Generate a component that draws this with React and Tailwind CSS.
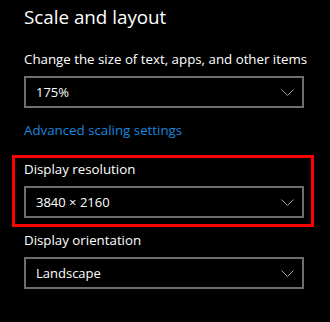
import React from 'react';

const font = { fontFamily: '"Open Sans", "Noto Sans", sans-serif' };

const Chevron = () => (
  <svg width="13" height="7" viewBox="0 0 13 7" fill="none">
    <polyline points="0.5,0.5 6.5,6.5 12.5,0.5" stroke="#a6a6a6" strokeWidth="1" />
  </svg>
);

const Dropdown = ({ value }) => (
  <div className="mt-[7px] w-[280px] h-[32px] border-2 border-[#6e6e6e] flex items-center justify-between pl-[10px] pr-[8px]">
    <span className="text-[13px] leading-[20px] text-white">{value}</span>
    <Chevron />
  </div>
);

const Label = ({ children, className = '' }) => (
  <div className={`text-[13.3px] leading-[20px] text-white ${className}`}>{children}</div>
);

const App = () => {
  return (
    <div className="w-[330px] h-[322px] bg-black overflow-hidden" style={font}>
      <div className="pl-[24px] pt-[3px]">
        <h1 className="text-[18.8px] leading-[28px] text-white font-normal">Scale and layout</h1>
        <Label className="mt-[18px]">Change the size of text, apps, and other items</Label>
        <Dropdown value="175%" />
        <div className="mt-[12px] text-[13.3px] leading-[20px] text-[#1a86dc]">Advanced scaling settings</div>
      </div>

      <div className="mt-[15px] ml-[12px] w-[302px] border-[3px] border-[#ff0000] pl-[9px] pr-[7px] pt-px pb-[6px]">
        <Label>Display resolution</Label>
        <Dropdown value="3840 × 2160" />
      </div>

      <div className="pl-[24px] mt-[3px]">
        <Label>Display orientation</Label>
        <Dropdown value="Landscape" />
      </div>
    </div>
  );
};

export default App;
